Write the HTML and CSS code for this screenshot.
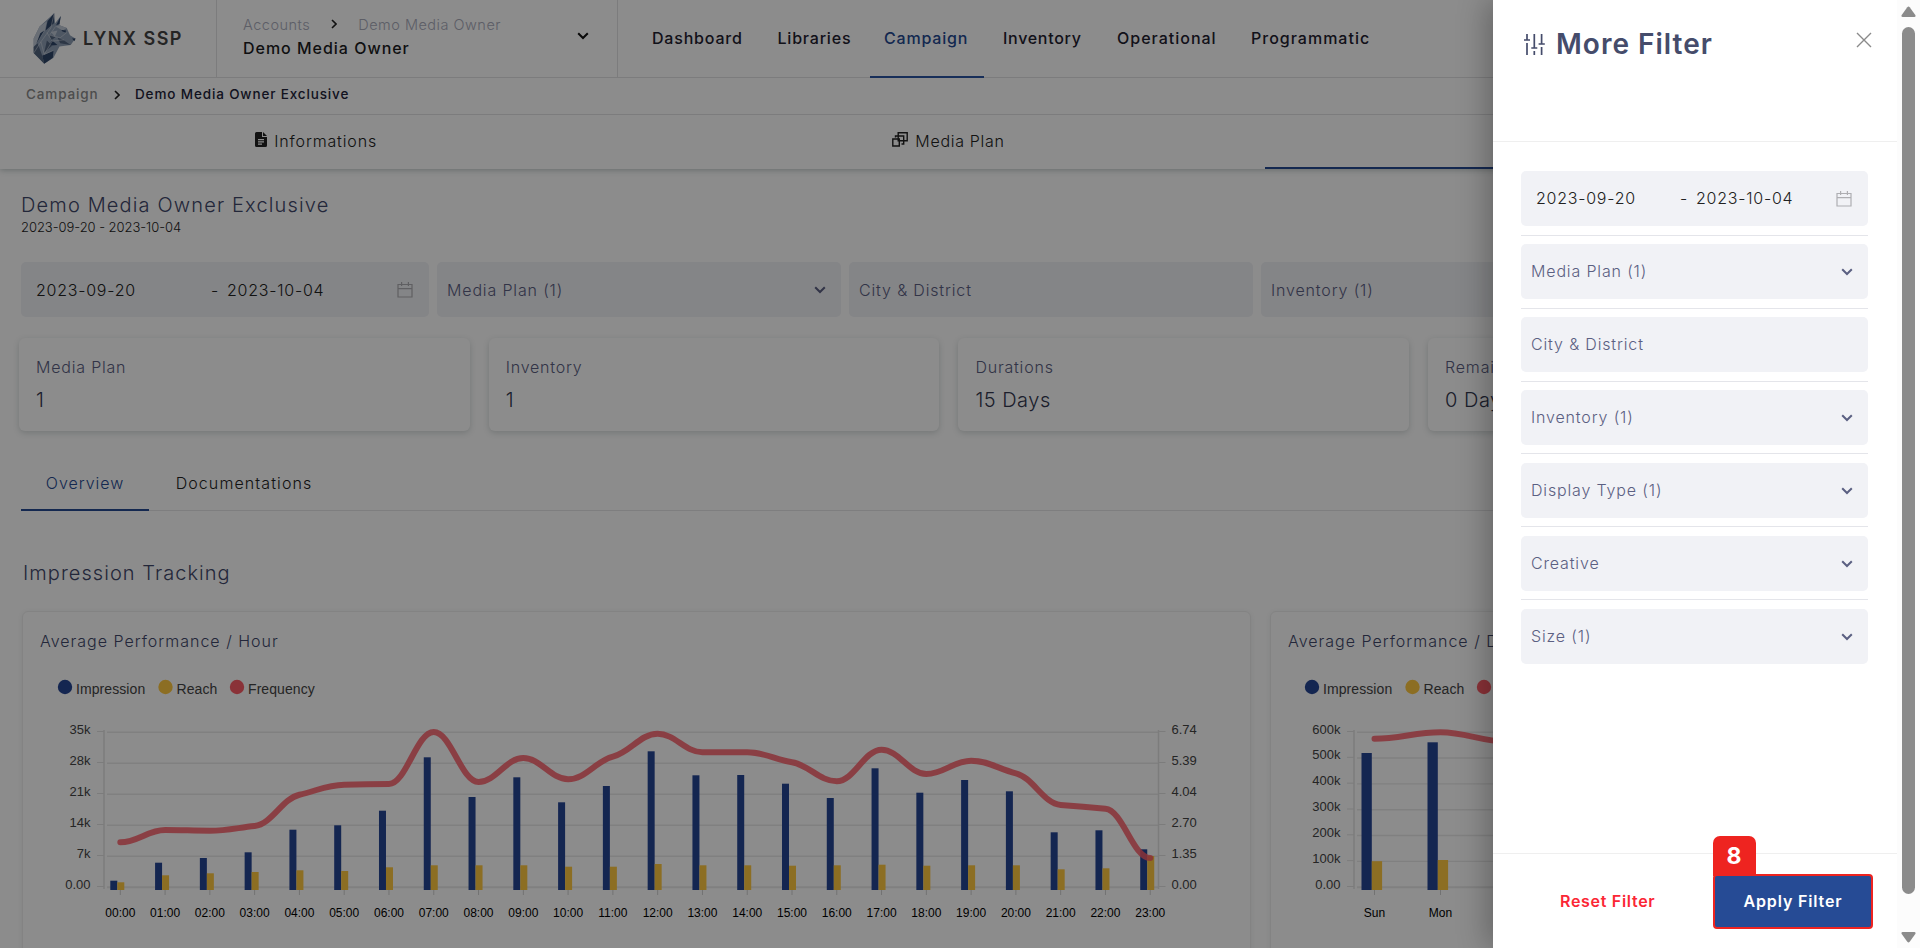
FILE: index.html
```html
<!DOCTYPE html>
<html lang="en">
<head>
<meta charset="utf-8">
<title>Lynx SSP - Campaign</title>
<link rel="stylesheet" href="styles.css">
</head>
<body>
<svg class="defs" width="0" height="0" aria-hidden="true">
  <symbol id="chev" viewBox="0 0 12 8"><path d="M1.2 1.2 6 6 10.8 1.2" fill="none" stroke="currentColor" stroke-width="2"/></symbol>
  <symbol id="next" viewBox="0 0 6 10"><path d="M1 1 5 5 1 9" fill="none" stroke="currentColor" stroke-width="1.6"/></symbol>
  <symbol id="cal" viewBox="0 0 16 16"><path d="M1 2.5h14v12.5H1zM1 6.7h14M4.6 0v4M11.4 0v4" fill="none" stroke="currentColor" stroke-width="1.2"/></symbol>
</svg>
<div class="shell">
  <div class="page">
    <header class="topbar">
      <div class="brand">
        <svg class="logo" viewBox="38 26 130 152">
          <path fill="#8f9fb5" d="M102 26 105 56 122 34 118 62 140 70 150 92 166 102 152 122 118 126 100 160 72 178 40 146V102L58 66Z"/>
          <path fill="#c0c9d6" d="M58 66 80 50 74 78 48 118 40 128V102ZM118 62 140 70 128 78 106 66ZM92 82 112 78 104 96Z"/>
          <path fill="#2f4568" d="M102 26 101 56 76 78 82 50ZM122 34 118 58 108 62ZM72 78 48 118 60 86ZM124 76l14 2-2 6-10-4ZM156 102l11 0-4 8ZM96 108 112 122 84 124ZM72 178 66 154 100 138 98 160Z"/>
          <path fill="#52647f" d="M40 128 52 116 66 154 72 178 40 146ZM80 108 96 124 72 144ZM88 90 106 98 92 108ZM112 98 132 108 152 122 120 116Z"/>
          <path fill="none" stroke="#d5dae2" stroke-width="1.6" d="M102 26 92 70 62 112 40 146M62 112 72 150 96 110 80 84M96 110 132 106M72 150 100 138M106 66 88 92 120 100 140 84"/>
        </svg>
        <span class="brand-name">LYNX SSP</span>
      </div>
      <div class="account">
        <div>
          <div class="account-path"><span>Accounts</span><svg width="6" height="10"><use href="#next"/></svg><span>Demo Media Owner</span></div>
          <div class="account-name">Demo Media Owner</div>
        </div>
        <svg class="account-chev" width="12" height="8"><use href="#chev"/></svg>
      </div>
      <nav class="nav">
        <a class="n1">Dashboard</a><a class="n2">Libraries</a><a class="n3 on">Campaign</a><a class="n4">Inventory</a><a class="n5">Operational</a><a class="n6">Programmatic</a>
      </nav>
    </header>
    <div class="crumbs"><span class="crumb-a">Campaign</span><svg width="6" height="10"><use href="#next"/></svg><span class="crumb-b">Demo Media Owner Exclusive</span></div>
    <div class="steps">
      <div class="step"><svg width="12" height="15" viewBox="0 0 12 15"><path fill="#222" fill-rule="evenodd" d="M1.5 0H7v5h5v8.500a1.500 1.500 0 0 1-1.500 1.500h-9A1.500 1.500 0 0 1 0 13.500v-12A1.500 1.500 0 0 1 1.500 0ZM3 7v1.200h6V7ZM3 9.300v1.200h6V9.300ZM3 11.600v1.200h4v-1.200ZM8 0l4 4H8Z"/></svg><span class="t-info">Informations</span></div>
      <div class="step"><svg width="16" height="15" viewBox="0 0 16 15"><path fill="none" stroke="#222" stroke-width="1.400" d="M6.200.7h9v8h-9zM3.500 5.500V4h8.200v8H9.500M.8 7h6.500v7H.8z"/></svg><span class="t-plan">Media Plan</span></div>
      <div class="step on"></div>
    </div>
    <main class="content">
      <h1 class="title">Demo Media Owner Exclusive</h1>
      <div class="dates">2023-09-20 - 2023-10-04</div>
      <div class="filters">
        <div class="field range"><span class="d1">2023-09-20</span><span class="dash">-</span><span class="d2">2023-10-04</span><svg class="cal" width="16" height="16"><use href="#cal"/></svg></div>
        <div class="field"><span>Media Plan (1)</span><svg width="12" height="8"><use href="#chev"/></svg></div>
        <div class="field"><span class="city">City &amp; District</span></div>
        <div class="field"><span>Inventory (1)</span><svg width="12" height="8"><use href="#chev"/></svg></div>
      </div>
      <div class="stats">
        <div class="stat"><div class="label">Media Plan</div><div class="value">1</div></div>
        <div class="stat"><div class="label">Inventory</div><div class="value">1</div></div>
        <div class="stat"><div class="label">Durations</div><div class="value">15 Days</div></div>
        <div class="stat"><div class="label">Remaining</div><div class="value">0 Days</div></div>
      </div>
      <div class="tabs"><span class="tab on">Overview</span><span class="tab docs">Documentations</span></div>
      <h2 class="section">Impression Tracking</h2>
      <div class="charts">
        <section class="chart"><h3>Average Performance / Hour</h3><svg id="hour" width="1227" height="295" viewBox="23 653 1227 295"></svg></section>
        <section class="chart"><h3>Average Performance / Day</h3><svg id="day" width="625" height="295" viewBox="1271 653 625 295"></svg></section>
      </div>
    </main>
    <div class="mask"></div>
    <aside class="drawer">
      <div class="drawer-head">
        <svg class="sliders" width="21" height="21" viewBox="0 0 21 21"><path fill="none" stroke="#454c6b" stroke-width="1.700" d="M3 0v6M0 6h6M3 9v12M10.300 0v14M7.300 14h6M10.300 17v4M17.600 0v10M14.600 10h6.200M17.600 13v8"/></svg>
        <h2>More Filter</h2>
        <svg class="close" width="16" height="16" viewBox="0 0 16 16"><path fill="none" stroke="#8a8a8a" stroke-width="1.400" d="M1 1 15 15M15 1 1 15"/></svg>
      </div>
      <div class="drawer-body">
        <div class="field range"><span class="d1">2023-09-20</span><span class="dash">-</span><span class="d2">2023-10-04</span><svg class="cal" width="16" height="16"><use href="#cal"/></svg></div>
        <hr>
        <div class="field"><span>Media Plan (1)</span><svg width="12" height="8"><use href="#chev"/></svg></div>
        <hr>
        <div class="field"><span class="city">City &amp; District</span></div>
        <hr>
        <div class="field"><span>Inventory (1)</span><svg width="12" height="8"><use href="#chev"/></svg></div>
        <hr class="up">
        <div class="field"><span>Display Type (1)</span><svg width="12" height="8"><use href="#chev"/></svg></div>
        <hr class="up">
        <div class="field"><span>Creative</span><svg width="12" height="8"><use href="#chev"/></svg></div>
        <hr class="up">
        <div class="field"><span>Size (1)</span><svg width="12" height="8"><use href="#chev"/></svg></div>
      </div>
      <div class="drawer-foot">
        <span class="reset">Reset Filter</span>
        <span class="apply"><b class="badge">8</b><span>Apply Filter</span></span>
      </div>
    </aside>
  </div>
  <div class="scrollbar">
    <svg width="15" height="12" viewBox="0 0 15 12"><path fill="#8b8b8b" d="M6.300 1.200q1.200-1.400 2.400 0L14.300 9q.8 2-1 2H1.700q-1.800 0-1-2Z"/></svg>
    <div class="thumb"></div>
    <svg width="15" height="12" viewBox="0 0 15 12"><path fill="#8b8b8b" d="M6.300 10.800q1.200 1.400 2.400 0L14.300 3q.8-2-1-2H1.700q-1.800 0-1 2Z"/></svg>
  </div>
</div>
<script src="charts.js"></script>
</body>
</html>
```
FILE: styles.css
```css
* { box-sizing: border-box; }
body { margin: 0; height: 948px; overflow: hidden; background: #fff; color: #222; font-family: Inter, "Open Sans", sans-serif; font-size: 16px; font-weight: 350; }
h1, h2, h3 { margin: 0; font-weight: 350; }
svg { display: block; flex: none; }
.defs { position: absolute; }
.shell { display: flex; height: 948px; }
.page { position: relative; width: 1897px; height: 948px; overflow: hidden; white-space: nowrap; }

.topbar { display: flex; height: 78px; border-bottom: 1px solid #e2e2e4; }
.brand { display: flex; align-items: center; width: 217px; padding-left: 33px; gap: 7px; border-right: 1px solid #e2e2e4; }
.logo { width: 43px; height: 51px; }
.brand-name { font-size: 18px; font-weight: 600; letter-spacing: 1.500px; color: #444; }
.account { display: flex; justify-content: space-between; width: 401px; padding: 14px 28px 0 26px; border-right: 1px solid #e2e2e4; }
.account-path { display: flex; gap: 21px; font-size: 14.500px; line-height: 22px; color: #a9abbb; letter-spacing: .5px; }
.account-path svg { margin-top: 5px; color: #222; }
.account-name { font-weight: 500; line-height: 24px; color: #1d1d1f; letter-spacing: .98px; }
.account-chev { margin-top: 18px; color: #111; }
.nav { display: flex; gap: 5px; padding-left: 20px; }
.nav a { height: 78px; padding-left: 14px; line-height: 76px; font-weight: 500; color: #1f2130; letter-spacing: .8px; }
.nav .n1 { width: 120.500px; }
.nav .n2 { width: 101.500px; }
.nav .n3 { width: 114px; }
.nav .n4 { width: 109px; letter-spacing: .7px; }
.nav .n5 { width: 129px; letter-spacing: 1px; }
.nav .n6 { width: 148px; letter-spacing: 1px; }
.nav .on { color: #264a92; border-bottom: 2px solid #2b55a3; }
.crumbs { position: relative; display: flex; height: 37px; padding-left: 26px; background: #fff; border-bottom: 1px solid #e2e2e4; line-height: 33px; font-size: 13.500px; font-weight: 500; letter-spacing: .86px; z-index: 1; }
.crumbs svg { margin: 12px 15px 0 14px; }
.crumb-a { width: 74px; color: #8c8c8c; }
.crumb-b { color: #22243a; }
.steps { display: grid; grid-template-columns: repeat(3, 1fr); height: 54px; box-shadow: 0 1px 6px rgba(20, 50, 50, .3); }
.step { display: flex; justify-content: center; gap: 7px; line-height: 53px; letter-spacing: .85px; }
.t-plan { letter-spacing: .7px; }
.step svg { margin-top: 17px; }
.step.on { border-bottom: 2px solid #264a92; }
.content { padding: 24px 19px 0 21px; }
.title { font-size: 20px; line-height: 24px; color: #41476a; letter-spacing: 1.150px; }
.dates { margin-top: 1px; font-size: 13px; line-height: 18px; letter-spacing: -.05px; }
.filters { display: grid; grid-template-columns: 408px 404px 404px 404px; gap: 8px; margin-top: 26px; }
.field { display: flex; align-items: center; justify-content: space-between; height: 55px; padding: 0 15px 0 10px; border-radius: 5px; background: #f1f2f6; color: #5b6082; letter-spacing: .85px; }
.range { padding: 0 16px 0 15px; justify-content: flex-start; color: #222; letter-spacing: .75px; }
.range .d1 { width: 175px; }
.range .dash { width: 16px; }
.cal { margin-left: auto; color: #aeaeb2; }
.stats { display: grid; grid-template-columns: repeat(4, 450.700px); gap: 19px; margin: 21px 0 0 -2px; }
.stat { height: 93px; padding: 17px 17px 0; border-radius: 6px; box-shadow: 0 2px 6px rgba(20, 50, 50, .18); }
.label { line-height: 24px; color: #5b6082; letter-spacing: .8px; }
.value { margin-top: 9px; font-size: 20px; line-height: 24px; color: #33384f; letter-spacing: .5px; }
.tabs { display: flex; margin-top: 25px; height: 55px; box-shadow: inset 0 -1px #e6e6e8; }
.tab { width: 128px; line-height: 54px; text-align: center; letter-spacing: .95px; }
.tab.on { border-bottom: 2px solid #264a92; color: #264a92; }
.tab.docs { width: 190px; letter-spacing: 1.100px; }
.section { margin: 47px 0 23px 2px; font-size: 20px; line-height: 30px; color: #41476a; letter-spacing: 1.050px; }
.charts { display: grid; grid-template-columns: 1229px 627px; gap: 19px; margin-left: 1px; }
.chart { height: 400px; padding-top: 17px; border: 1px solid #eee; border-radius: 6px; box-shadow: 0 1px 5px rgba(20, 50, 50, .08); }
.chart h3 { padding-left: 17px; font-size: 16px; line-height: 24px; color: #41476a; letter-spacing: 1px; }
.chart text { font-family: "Liberation Sans", Arial, sans-serif; font-weight: 400; }
.axis { font-size: 13px; fill: #444; }
.cat { font-size: 12px; fill: #000; text-anchor: middle; }
.leg { font-size: 14px; fill: #444; letter-spacing: .08px; }

.mask { position: absolute; inset: 0; background: rgba(0, 0, 0, .45); z-index: 2; }
.drawer { position: absolute; top: 0; right: 0; z-index: 3; display: flex; flex-direction: column; width: 404px; height: 948px; background: #fff; box-shadow: -6px 0 28px rgba(0, 0, 0, .28); }
.drawer-head { display: flex; height: 142px; padding: 26px 25px 0 31px; border-bottom: 1px solid #efefef; }
.sliders { margin-top: 8px; }
.drawer-head h2 { margin-left: 11px; font-size: 28px; line-height: 36px; font-weight: 600; color: #454c6b; letter-spacing: 1px; }
.close { margin: 6px 0 0 auto; }
.drawer-body { flex: 1; padding: 29px 29px 0 28px; }
.drawer-body .field > span { padding-bottom: 1px; }
.drawer-body .field.range .d1 { width: 144px; }
hr { height: 1px; margin: 9px 0 8px; border: 0; background: #e4e5ea; }
hr.up { margin: 8px 0 9px; }
.drawer-foot { display: flex; height: 95px; padding: 20px 24px 0 67px; border-top: 1px solid #efefef; justify-content: space-between; line-height: 55px; }
.reset { color: #fb2635; font-weight: 600; letter-spacing: .7px; }
.apply { position: relative; width: 160px; height: 55px; border: 2px solid #ee2420; border-radius: 4px; background: #264b95; color: #fff; font-weight: 600; line-height: 51px; text-align: center; letter-spacing: .85px; }
.badge { position: absolute; left: -2px; top: -40px; width: 43px; height: 40px; border-radius: 7px 7px 0 0; background: #ee2420; font-size: 23px; line-height: 41px; font-weight: 700; }
.scrollbar { display: flex; flex-direction: column; align-items: center; width: 23px; padding: 6px 0 5px; background: #fcfcfc; }
.thumb { width: 13px; height: 867px; margin: 9px 0 auto; border-radius: 7px; background: #8b8b8b; }
```
FILE: charts.js
```js
// Smooth path through the points with monotone tangents.
function curve(p) {
  const n = p.length, s = [], m = [];
  for (let i = 0; i < n - 1; i++) s.push((p[i + 1][1] - p[i][1]) / (p[i + 1][0] - p[i][0]));
  m[0] = 0; m[n - 1] = 0;
  for (let i = 1; i < n - 1; i++) {
    m[i] = s[i - 1] * s[i] <= 0 ? 0 : Math.sign(s[i]) * Math.min(Math.abs(s[i - 1]), Math.abs(s[i]), Math.abs(s[i - 1] + s[i]) / 4);
  }
  let d = `M${p[0]}`;
  for (let i = 0; i < n - 1; i++) {
    const h = (p[i + 1][0] - p[i][0]) / 2.6;
    d += `C${p[i][0] + h} ${p[i][1] + h * m[i]} ${p[i + 1][0] - h} ${p[i + 1][1] - h * m[i + 1]} ${p[i + 1]}`;
  }
  return d;
}

function draw(id, o) {
  let g = '';
  const n = o.left.length - 1;
  for (let i = 0; i <= n; i++) {
    const y = 731.5 + 155 * i / n;
    g += `<path d="M${o.x0 + 3} ${y + .7}H${o.x1}" stroke="#e9e9e9" stroke-width="${i === n ? 2 : 1.4}"/>`;
    g += `<path d="M${o.x0 - 7} ${y}h7" stroke="#e2e2e2"/>`;
    g += `<text class="axis" text-anchor="end" x="${o.x0 - 13.5}" y="${y + 2}">${o.left[i]}</text>`;
    if (o.right) g += `<path d="M${o.x1} ${y}h7" stroke="#e2e2e2"/><text class="axis" x="${o.x1 + 13}" y="${y + 2}">${o.right[i]}</text>`;
  }
  g += `<path d="M${o.x0} 730V889${o.right ? `M${o.x1} 730V889` : ''}" stroke="#e2e2e2" stroke-width="1.500"/>`;
  const pts = [];
  o.cats.forEach((c, i) => {
    const x = o.c0 + o.step * i;
    g += `<rect x="${x - o.off}" y="${o.blue[i]}" width="${o.bw}" height="${890 - o.blue[i]}" fill="#264594"/>`;
    g += `<rect x="${x - o.off + o.bw}" y="${o.gold[i]}" width="${o.bw}" height="${890 - o.gold[i]}" fill="#ffc841"/>`;
    g += `<path d="M${x} 890v5" stroke="#d0d0d0"/><text class="cat" x="${x}" y="917">${c}</text>`;
    pts.push([x, o.line[i]]);
  });
  g += `<path d="${curve(pts)}" fill="none" stroke="#fb5c66" stroke-opacity=".85" stroke-width="6" stroke-linecap="round"/>`;
  [['Impression', '#264594', 0], ['Reach', '#ffc841', 100.500], ['Frequency', '#fb5c66', 172]].forEach(([t, c, dx]) => {
    g += `<circle cx="${o.leg + dx}" cy="687" r="7.200" fill="${c}"/><text class="leg" x="${o.leg + dx + 11}" y="694">${t}</text>`;
  });
  document.getElementById(id).innerHTML = g;
}

draw('hour', {
  x0: 104, x1: 1158.500, c0: 120.300, step: 44.780, off: 10, bw: 7, leg: 65,
  left: ['35k', '28k', '21k', '14k', '7k', '0.00'],
  right: ['6.74', '5.39', '4.04', '2.70', '1.35', '0.00'],
  cats: Array.from({ length: 24 }, (_, i) => String(i).padStart(2, '0') + ':00'),
  blue: [880.7, 862.7, 858, 852.3, 829.7, 825.3, 810.7, 757.3, 797, 777.3, 802.3, 786, 751.3, 775.3, 775, 783.7, 798, 768.3, 792.7, 780, 791.3, 832.3, 830.3, 849.3],
  gold: [882.3, 875.3, 873.3, 872, 870.3, 871, 867.3, 865.3, 865.3, 865.3, 866.7, 866.7, 864, 865.3, 865.3, 865.7, 865.3, 864.7, 865.7, 865.3, 865.3, 869.3, 868.3, 856],
  line: [842.3, 830, 830.7, 826, 794.7, 784.7, 784, 732, 782, 758, 779.3, 756.7, 733.7, 752.3, 752.3, 762.3, 781.3, 749.7, 774, 760.7, 773.3, 805, 808.7, 858]
});
draw('day', {
  x0: 1354, x1: 1860, c0: 1374.500, step: 66, off: 13, bw: 10.300, leg: 1312,
  left: ['600k', '500k', '400k', '300k', '200k', '100k', '0.00'],
  cats: ['Sun', 'Mon', 'Tue'],
  blue: [753, 742.3, 750],
  gold: [861.2, 860, 861],
  line: [738.8, 732.3, 741.5]
});
```
